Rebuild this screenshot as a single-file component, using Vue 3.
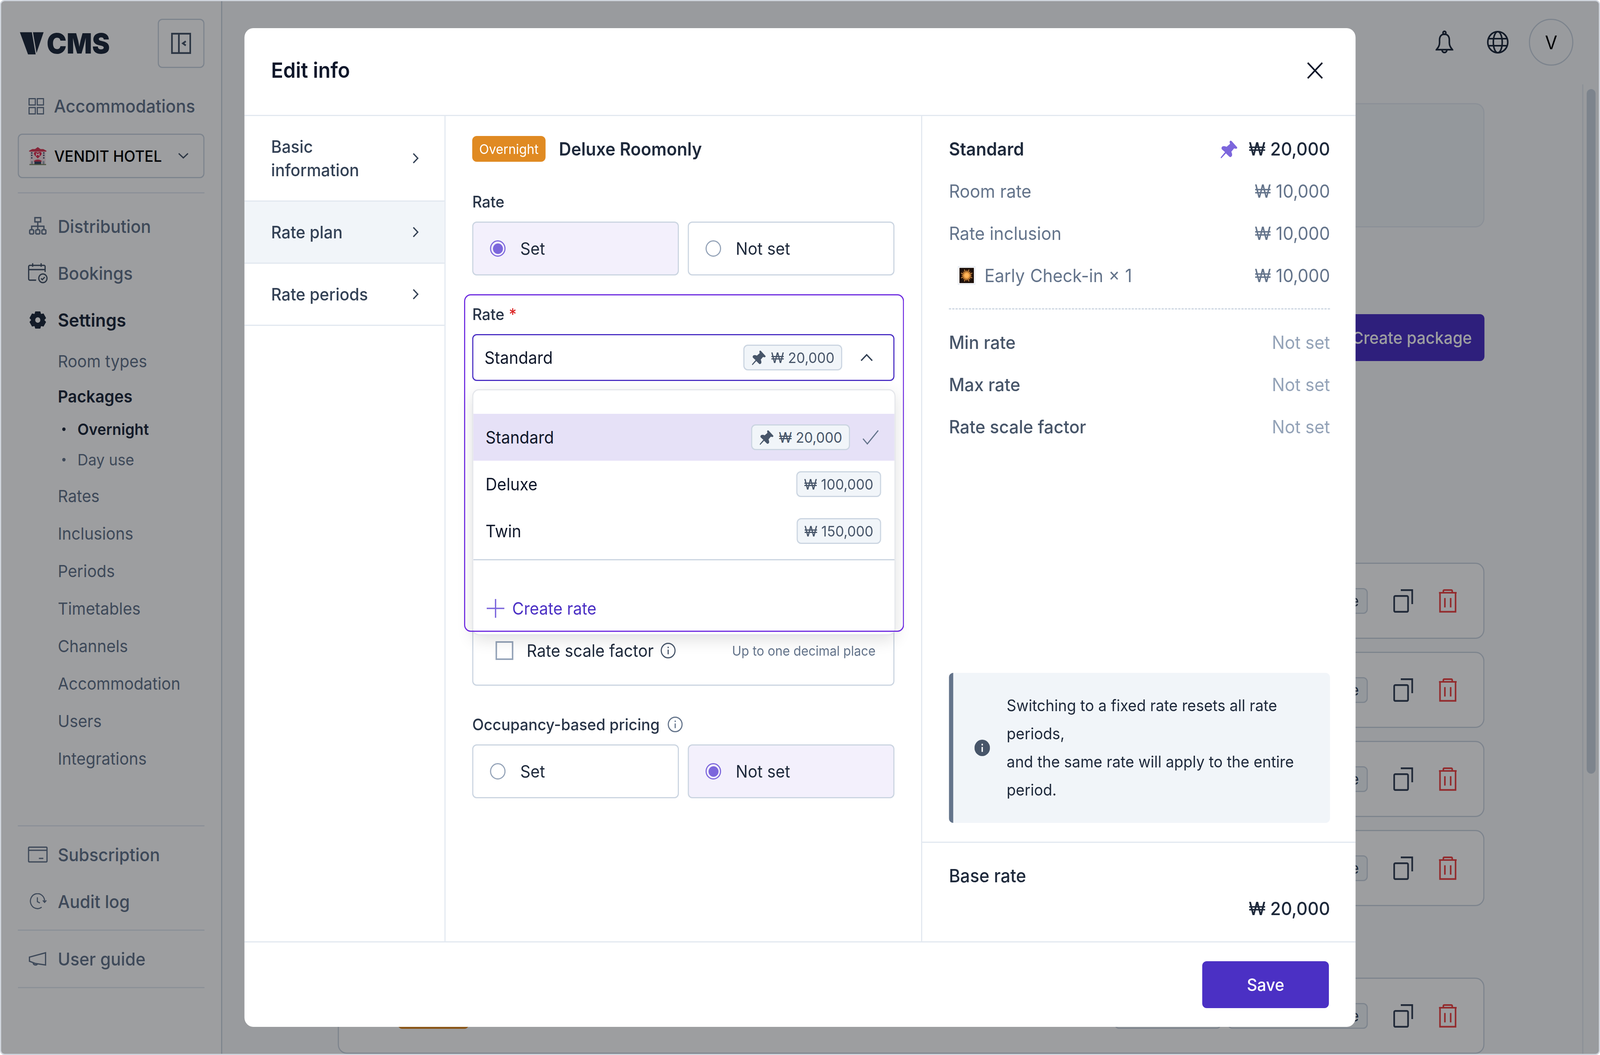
<script setup>
const fit = Math.min(1, window.innerWidth / 4320)
const subNav = ['Rates', 'Inclusions', 'Periods', 'Timetables', 'Channels', 'Accommodation', 'Users', 'Integrations']
const rows = [1, 2, 3, 4]
const pinPath = 'M150 62Q155 52 165 60L208 105Q214 115 200 118L185 115L163 140Q172 160 168 170Q160 185 148 178L120 152L85 188Q76 192 80 180L113 143L88 122Q80 110 92 100Q110 95 125 103L153 80Q148 70 150 62Z'
function gearPath() {
  const cx = 9, cy = 9, teeth = 6, ro = 8.6, ri = 6.6
  let d = ''
  for (let i = 0; i < teeth; i++) {
    const a = (i / teeth) * Math.PI * 2 - Math.PI / 2
    const w = 0.3, g = 0.24
    const pts = [[a - w - g, ri], [a - w, ro], [a + w, ro], [a + w + g, ri]]
    pts.forEach(([t, r], j) => {
      const x = (cx + r * Math.cos(t)).toFixed(2), y = (cy + r * Math.sin(t)).toFixed(2)
      d += (i === 0 && j === 0 ? 'M' : 'L') + x + ' ' + y
    })
  }
  return d + 'Z M9 6.4a2.6 2.6 0 1 0 0 5.2a2.6 2.6 0 1 0 0-5.2Z'
}
const gear = gearPath()
const rays = Array.from({ length: 16 }, (_, i) => {
  const a = (i / 16) * Math.PI * 2
  const r = i % 2 ? 5.6 : 4
  return `M8 8L${(8 + r * Math.cos(a)).toFixed(2)} ${(8 + r * Math.sin(a)).toFixed(2)}`
}).join('')
</script>

<template>
  <div class="page" :style="{ transform: `scaleX(${fit})` }">
    <aside class="side">
      <div class="brand">
        <div class="logo">
          <svg class="logo-v" viewBox="0 0 22 20"><path d="M0 .2H11L14.5 19.5H7.5Z M12 .2H21.8L15.3 18.2Z" /></svg>
          <span class="logo-t">CMS</span>
        </div>
        <button class="collapse">
          <svg viewBox="0 0 18 18" class="ic18"><rect x=".75" y=".75" width="16.5" height="16.5" /><path d="M7 .75V17.25M13.2 7.2L10.6 9L13.2 10.8" /></svg>
        </button>
      </div>
      <a class="acc">
        <svg viewBox="0 0 14 14" class="ic14"><rect x=".5" y=".5" width="5.6" height="5.4" /><rect x="7.9" y=".5" width="5.6" height="5.4" /><rect x=".5" y="8.1" width="5.6" height="5.4" /><rect x="7.9" y="8.1" width="5.6" height="5.4" /></svg>
        <span>Accommodations</span>
      </a>
      <button class="hotel">
        <svg viewBox="0 0 16 16" class="emoji">
          <rect x="1" y="3.5" width="14" height="11.5" fill="#f3e1e4" />
          <path d="M.2 3.6L3 2.2H5.5L8 .5L10.5 2.2H13L15.8 3.6V4.3H.2Z" fill="#d83a55" />
          <path d="M8 10.2L4.8 7Q3.9 5 5.8 4.6Q7.2 4.4 8 5.4Q8.8 4.4 10.2 4.6Q12.1 5 11.2 7Z" fill="#e02f52" />
          <path d="M6.8 5.6V8M9.2 5.6V8M6.8 6.8H9.2" stroke="#fff" stroke-width=".7" fill="none" />
          <path d="M2 5.5H3.2M2 7.5H3.2M12.8 5.5H14M12.8 7.5H14M2 9.7H3.2M12.8 9.7H14" stroke="#3d4b6b" stroke-width="1.1" />
          <path d="M5 15V12.5H11V15Z" fill="#36465f" />
          <path d="M4.5 12.2Q8 10 11.5 12.2V12.8H4.5Z" fill="#d83a55" />
          <path d="M2 15V12.5H3.6V15M12.4 15V12.5H14V15" fill="#9aa6b5" />
          <path d="M.5 15.4H15.5" stroke="#7d8a66" stroke-width=".9" />
        </svg>
        <span class="hotel-name">VENDIT HOTEL</span>
        <svg viewBox="0 0 12 7" class="hotel-chev"><path d="M1 1L6 5.5L11 1" /></svg>
      </button>
      <div class="rule rule-a"></div>
      <a class="item">
        <svg viewBox="0 0 16 16" class="ic-main"><rect x="5.4" y=".7" width="5.2" height="3.6" /><path d="M8 4.5V8M2.5 11V8H13.5V11M8 8V11" /><rect x=".7" y="11" width="3.6" height="3.6" rx=".8" /><rect x="6.2" y="11" width="3.6" height="3.6" rx=".8" /><rect x="11.7" y="11" width="3.6" height="3.6" rx=".8" /></svg>
        <span>Distribution</span>
      </a>
      <a class="item">
        <svg viewBox="0 0 18 18" class="ic18 bare"><path d="M7.5 15H1.8A1 1 0 0 1 .8 14V3.4A1 1 0 0 1 1.8 2.4H14.6A1 1 0 0 1 15.6 3.4V8M.8 6H15.6M4.4.6V3.6M12 .6V3.6" /><circle cx="13.6" cy="13.4" r="3.7" /><path d="M11.9 13.5L13.1 14.6L15.3 12.4" /></svg>
        <span>Bookings</span>
      </a>
      <a class="item strong">
        <svg viewBox="0 0 18 18" class="gear"><path :d="gear" fill-rule="evenodd" /></svg>
        <span>Settings</span>
      </a>
      <a class="sub sub-first">Room types</a>
      <a class="sub sub-strong">Packages</a>
      <a class="leaf leaf-on"><i></i>Overnight</a>
      <a class="leaf"><i></i>Day use</a>
      <div class="sub-rest">
        <a v-for="s in subNav" :key="s" class="sub tall">{{ s }}</a>
      </div>
      <div class="rule rule-b"></div>
      <a class="item">
        <svg viewBox="0 0 18 14" class="ic-wide"><rect x=".7" y=".7" width="16.6" height="12.6" rx=".8" /><path d="M.7 3.4H17.3M10 10.3H14" /></svg>
        <span>Subscription</span>
      </a>
      <a class="item">
        <svg viewBox="0 0 18 16" class="ic-wide"><path d="M16 8A7.3 7.3 0 1 0 13 13.6M14.2 7L16 8.9L17.8 7" /><path d="M8.6 4V8.2L11.2 9.5" /></svg>
        <span>Audit log</span>
      </a>
      <div class="rule rule-c"></div>
      <a class="item">
        <svg viewBox="0 0 18 14" class="ic-wide"><path d="M1.5 5.5L16 1.8V12.2L7 11L1.5 9Z M4.8 10.1Q5 12.4 7.4 12.2Q8.6 12 8.6 11.2" /></svg>
        <span>User guide</span>
      </a>
      <div class="rule rule-d"></div>
    </aside>

    <main class="main">
      <header class="top">
        <svg viewBox="0 0 16 20" class="bell"><circle cx="8" cy="2" r="1.3" /><path d="M8 3.2C4.8 3.2 3.6 5.5 3.6 8.2V10.5C3.6 13 2.4 14.5 .8 16.4H15.2C13.6 14.5 12.4 13 12.4 10.5V8.2C12.4 5.5 11.2 3.2 8 3.2ZM5.8 16.6A2.2 2.2 0 0 0 10.2 16.6" /></svg>
        <svg viewBox="0 0 20 20" class="globe"><circle cx="10" cy="10" r="9" /><ellipse cx="10" cy="10" rx="4" ry="9" /><path d="M1.6 7H18.4M1.6 13H18.4" /></svg>
        <div class="avatar">V</div>
      </header>
      <div class="body">
        <div class="content">
          <div class="panel"></div>
          <button class="create">Create package</button>
          <div class="list">
            <div v-for="r in rows" :key="r" class="row">
              <span class="pill">Edit rate</span>
              <svg viewBox="0 0 18 20" class="copy"><rect x=".75" y="5.75" width="12.5" height="13.5" rx="1" /><path d="M6.7 .75H17V12.7" /></svg>
              <svg viewBox="0 0 16 20" class="trash"><path d="M0 3H16M4 3V1.6Q4 .7 5 .7H11Q12 .7 12 1.6V3M1 3V19.2H15V3M5.4 7.5V15.5M10.6 7.5V15.5" /></svg>
            </div>
            <div class="row last">
              <span class="orange"></span>
              <span class="pill wide"></span>
              <span class="pill">Edit rate</span>
              <svg viewBox="0 0 18 20" class="copy"><rect x=".75" y="5.75" width="12.5" height="13.5" rx="1" /><path d="M6.7 .75H17V12.7" /></svg>
              <svg viewBox="0 0 16 20" class="trash"><path d="M0 3H16M4 3V1.6Q4 .7 5 .7H11Q12 .7 12 1.6V3M1 3V19.2H15V3M5.4 7.5V15.5M10.6 7.5V15.5" /></svg>
            </div>
          </div>
        </div>
        <div class="track"><div class="thumb"></div></div>
      </div>
    </main>

    <div class="overlay">
      <section class="modal">
        <header class="m-head">
          <h2>Edit info</h2>
          <svg viewBox="0 0 16 16" class="close"><path d="M1 1L15 15M15 1L1 15" /></svg>
        </header>
        <div class="m-body">
          <nav class="m-nav">
            <a class="m-link">
              <span>Basic<br />information</span>
              <svg viewBox="0 0 6 10" class="m-chev"><path d="M1 1L5 5L1 9" /></svg>
            </a>
            <a class="m-link on">
              <span>Rate plan</span>
              <svg viewBox="0 0 6 10" class="m-chev"><path d="M1 1L5 5L1 9" /></svg>
            </a>
            <a class="m-link">
              <span>Rate periods</span>
              <svg viewBox="0 0 6 10" class="m-chev"><path d="M1 1L5 5L1 9" /></svg>
            </a>
          </nav>

          <div class="form">
            <div class="title-row">
              <span class="tag">Overnight</span>
              <span class="pkg">Deluxe Roomonly</span>
            </div>
            <label class="label first">Rate</label>
            <div class="choice">
              <div class="opt sel"><i class="radio on"></i>Set</div>
              <div class="opt"><i class="radio"></i>Not set</div>
            </div>
            <label class="label second">Rate <b>*</b></label>
            <div class="select">
              <span class="sel-text">Standard</span>
              <span class="chip">
                <svg viewBox="70 45 150 150" class="chip-pin"><path :d="pinPath" /></svg>
                ₩ 20,000
              </span>
              <svg viewBox="0 0 12 7" class="sel-chev"><path d="M1 6L6 1L11 6" /></svg>
            </div>
            <div class="extras">
              <div class="extra-row">
                <i class="check"></i>
                <span class="extra-name">Rate scale factor</span>
                <svg viewBox="0 0 14 14" class="info"><circle cx="7" cy="7" r="6.2" /><path d="M7 6.2V10.2M7 3.7V4.9" /></svg>
                <span class="hint">Up to one decimal place</span>
              </div>
            </div>
            <label class="label third">
              Occupancy-based pricing
              <svg viewBox="0 0 14 14" class="info light"><circle cx="7" cy="7" r="6.2" /><path d="M7 6.2V10.2M7 3.7V4.9" /></svg>
            </label>
            <div class="choice">
              <div class="opt"><i class="radio"></i>Set</div>
              <div class="opt sel"><i class="radio on"></i>Not set</div>
            </div>

            <div class="drop">
              <div class="drop-list">
                <div class="drop-row active">
                  <span class="drop-name">Standard</span>
                  <span class="chip">
                    <svg viewBox="70 45 150 150" class="chip-pin"><path :d="pinPath" /></svg>
                    ₩ 20,000
                  </span>
                  <svg viewBox="0 0 15 13" class="tick"><path d="M.7 7.6L4.6 12L14.4 .6" /></svg>
                </div>
                <div class="drop-row">
                  <span class="drop-name">Deluxe</span>
                  <span class="chip">₩ 100,000</span>
                </div>
                <div class="drop-row">
                  <span class="drop-name">Twin</span>
                  <span class="chip">₩ 150,000</span>
                </div>
              </div>
              <div class="drop-foot">
                <svg viewBox="0 0 16 16" class="plus"><path d="M8 0V16M0 8H16" /></svg>
                <span>Create rate</span>
              </div>
            </div>
            <div class="focus"></div>
          </div>

          <div class="summary">
            <div class="sum-top">
              <div class="line head">
                <span>Standard</span>
                <span class="price">
                  <svg viewBox="70 45 150 150" class="big-pin"><path :d="pinPath" /></svg>
                  ₩ 20,000
                </span>
              </div>
              <div class="line muted"><span>Room rate</span><span>₩ 10,000</span></div>
              <div class="line muted"><span>Rate inclusion</span><span>₩ 10,000</span></div>
              <div class="line muted">
                <span class="early">
                  <svg viewBox="0 0 16 16" class="spark">
                    <defs>
                      <radialGradient id="sparkGlow">
                        <stop offset="0" stop-color="#fff3c4" />
                        <stop offset=".35" stop-color="#f59a35" />
                        <stop offset="1" stop-color="#7a3208" stop-opacity="0" />
                      </radialGradient>
                    </defs>
                    <rect x=".4" y=".4" width="15.2" height="15.2" fill="#fff" stroke="#e2e8f0" stroke-width=".6" />
                    <rect x="1.5" y="1.5" width="13" height="13" fill="#1b0f0a" />
                    <circle cx="8" cy="8" r="5.6" fill="url(#sparkGlow)" />
                    <path :d="rays" stroke="#ffb65c" stroke-width=".45" />
                  </svg>
                  <span class="early-text">Early Check-in × 1</span>
                </span>
                <span>₩ 10,000</span>
              </div>
              <div class="dash"></div>
              <div class="line plain"><span>Min rate</span><span class="unset">Not set</span></div>
              <div class="line plain"><span>Max rate</span><span class="unset">Not set</span></div>
              <div class="line plain"><span>Rate scale factor</span><span class="unset">Not set</span></div>
              <div class="notice">
                <svg viewBox="0 0 14 14" class="notice-ic"><circle cx="7" cy="7" r="7" /><path d="M7 6.2V10.4M7 3.5V4.9" /></svg>
                <p>Switching to a fixed rate resets all rate periods,<br />and the same rate will apply to the entire period.</p>
              </div>
            </div>
            <div class="base">
              <div class="base-name">Base rate</div>
              <div class="base-val">₩ 20,000</div>
            </div>
          </div>
        </div>
        <footer class="m-foot"><button class="save">Save</button></footer>
      </section>
    </div>
  </div>
</template>

<style scoped>
.page {
  zoom: 3;
  transform-origin: 0 0;
  position: relative;
  width: 1440px;
  height: 900px;
  box-sizing: border-box;
  display: flex;
  overflow: hidden;
  border: 1px solid #cfd4dc;
  border-radius: 4px;
  background: #f8fafc;
  font-family: Inter, "Noto Sans", sans-serif;
  color: #1e293b;
}
svg { display: block; flex: none; fill: none; }
button { font-family: inherit; cursor: pointer; }

/* sidebar */
.side {
  width: 199px;
  flex: none;
  box-sizing: border-box;
  background: #fff;
  border-right: 1px solid #cbd5e1;
  padding: 0 15px;
  display: flex;
  flex-direction: column;
}
.brand { height: 73px; display: flex; align-items: center; justify-content: space-between; flex: none; padding-bottom: 1px; box-sizing: border-box; }
.logo { display: flex; align-items: center; margin-left: 1.5px; }
.logo-v { width: 22px; height: 19.6px; fill: #1e293b; }
.logo-t { font-weight: 900; font-size: 24px; line-height: 20px; color: #1e293b; margin-left: 2.5px; }
.collapse { width: 42px; height: 42px; box-sizing: border-box; border: 1px solid #cbd5e1; background: #fff; border-radius: 4px; padding: 0; display: flex; align-items: center; justify-content: center; }
.ic18 { width: 18px; height: 18px; stroke: #475569; stroke-width: 1.5; }
.ic18.bare { stroke-width: 1.1; }
.acc { height: 33px; display: flex; align-items: center; gap: 9px; padding-left: 9.5px; font-size: 15.2px; font-weight: 500; color: #64748b; flex: none; }
.ic14 { width: 14px; height: 14px; stroke: #64748b; stroke-width: 1; }
.hotel { margin-top: 7px; height: 38px; flex: none; box-sizing: border-box; width: 168px; border: 1px solid #cbd5e1; border-radius: 4px; background: #fff; padding: 0 13px 0 9px; display: flex; align-items: center; color: #000; }
.emoji { width: 16px; height: 16px; }
.hotel-name { margin-left: 6.8px; font-size: 13.3px; font-weight: 500; white-space: nowrap; }
.hotel-chev { width: 10px; height: 6px; margin-left: auto; stroke: #475569; stroke-width: 1.3; }
.rule { height: 1px; background: #e2e8f0; flex: none; }
.rule-a { margin-top: 12px; margin-bottom: 8px; }
.item { height: 40px; flex: none; display: flex; align-items: center; gap: 9px; padding-left: 9px; font-size: 15.2px; font-weight: 500; color: #64748b; }
.item.strong { font-weight: 600; font-size: 15.5px; color: #1e293b; }
.ic-main { width: 16px; height: 16px; margin: 0 1px; stroke: #64748b; stroke-width: 1.2; }
.gear { width: 16px; height: 16px; margin: 0 1px; fill: #1e293b; }
.ic-wide { width: 18px; height: 14px; stroke: #64748b; stroke-width: 1.1; }
.sub { display: flex; align-items: center; height: 30px; padding-left: 36px; font-size: 14.3px; color: #64748b; flex: none; }
.sub-strong { font-weight: 600; color: #1e293b; }
.sub.tall { height: 32px; }
.sub-rest { margin-top: 2px; flex: none; }
.leaf { display: flex; align-items: center; height: 26px; padding-left: 40px; font-size: 13.4px; color: #64748b; flex: none; }
.leaf i { width: 3px; height: 3px; border-radius: 50%; background: currentColor; margin-right: 10.7px; }
.leaf-on { font-weight: 600; color: #1e293b; }
.rule-b { margin-top: 41px; margin-bottom: 4px; }
.rule-c { margin-top: 4px; margin-bottom: 4px; }
.rule-d { margin-top: 4px; }

/* main */
.main { flex: 1; display: flex; flex-direction: column; min-width: 0; }
.top { height: 71px; flex: none; display: flex; align-items: center; justify-content: flex-end; padding-right: 23px; padding-bottom: 1px; box-sizing: border-box; }
.bell { width: 16px; height: 20px; stroke: #1e293b; stroke-width: 1.4; margin-right: 30px; }
.globe { width: 20px; height: 20px; stroke: #1e293b; stroke-width: 1.4; margin-right: 18px; }
.avatar { width: 40px; height: 40px; box-sizing: border-box; border: 1px solid #cbd5e1; border-radius: 50%; display: flex; align-items: center; justify-content: center; color: #000; font-size: 16px; }
.body { flex: 1; min-height: 0; display: flex; }
.content { flex: 1; min-width: 0; padding: 16px 88px 0 104px; box-sizing: border-box; overflow: hidden; display: flex; flex-direction: column; align-items: stretch; }
.panel { height: 106px; flex: none; box-sizing: border-box; background: #f1f5f9; border: 1px solid #e2e8f0; border-radius: 8px; }
.create { margin-top: 74px; align-self: flex-end; width: 128px; height: 40px; flex: none; border: 0; border-radius: 4px; background: #4b30c4; color: #fff; font-size: 14.3px; font-weight: 500; padding: 0 2.5px 0 0; }
.list { margin-top: 172px; display: flex; flex-direction: column; gap: 11px; }
.row { height: 65px; flex: none; box-sizing: border-box; border: 1px solid #cbd5e1; border-radius: 8px; background: #fff; display: flex; align-items: center; justify-content: flex-end; padding-right: 24px; }
.row.last { margin-top: 50px; position: relative; }
.pill { width: 100px; height: 22px; box-sizing: border-box; border: 1px solid #cbd5e1; background: #f1f5f9; border-radius: 4px; font-size: 13px; color: #334155; display: flex; align-items: center; justify-content: flex-end; padding-right: 7px; margin-right: 23px; white-space: nowrap; }
.pill.wide { width: 96px; margin-right: 6px; }
.row.last .pill:not(.wide) { width: 126px; }
.orange { width: 64px; height: 22px; background: #e08a22; border-radius: 4px; margin-right: auto; margin-left: 53px; }
.copy { width: 18px; height: 20px; stroke: #334155; stroke-width: 1.5; margin-right: 23px; }
.trash { width: 16px; height: 20px; stroke: #ef4444; stroke-width: 1.4; }
.track { width: 15px; flex: none; box-sizing: border-box; border-left: 1px solid #e2e8f0; padding: 4px 3px 0 3px; }
.thumb { width: 8px; height: 584px; border-radius: 4px; background: #cbd5e1; }

/* overlay and modal */
.overlay { position: absolute; inset: -1px; background: rgba(3, 5, 10, .39); }
.modal { position: absolute; left: 220px; top: 24px; width: 1000px; height: 852px; background: #fff; border-radius: 8px; display: flex; flex-direction: column; overflow: hidden; }
.m-head { height: 75px; flex: none; box-sizing: border-box; border-bottom: 1px solid #e2e8f0; display: flex; align-items: center; justify-content: space-between; padding: 0 29px 2px 24px; }
.m-head h2 { margin: 0; font-size: 18px; line-height: 28px; font-weight: 600; color: #0f172a; }
.close { width: 15px; height: 15px; stroke: #0f172a; stroke-width: 1.5; }
.m-body { flex: 1; min-height: 0; display: flex; }
.m-foot { height: 73px; flex: none; box-sizing: border-box; border-top: 1px solid #e2e8f0; display: flex; align-items: flex-start; justify-content: flex-end; padding: 16px 24px 0 0; }
.save { width: 114px; height: 40px; border: 0; border-radius: 4px; background: #4b30c4; color: #fff; font-size: 14.4px; font-weight: 500; }

.m-nav { width: 181px; flex: none; box-sizing: border-box; border-right: 1px solid #e2e8f0; }
.m-link { display: flex; align-items: center; justify-content: space-between; box-sizing: content-box; padding: 16px 24px; border-bottom: 1px solid #e2e8f0; font-size: 14.5px; line-height: 20px; font-weight: 500; color: #334155; }
.m-link.on { background: #f1f5f9; }
.m-chev { width: 6px; height: 10px; stroke: #334155; stroke-width: 1.1; margin-right: -1px; }

.form { position: relative; width: 429px; flex: none; box-sizing: border-box; border-right: 1px solid #e2e8f0; padding: 17px 24px 0; }
.title-row { display: flex; align-items: center; gap: 12px; height: 22px; }
.tag { width: 66px; height: 22px; border-radius: 4px; background: #e08a22; color: #fff; font-size: 11.5px; display: flex; align-items: center; justify-content: center; }
.pkg { font-size: 15.3px; font-weight: 600; color: #1e293b; }
.label { display: flex; align-items: center; gap: 7px; height: 20px; font-size: 13.6px; font-weight: 500; color: #293548; }
.label b { color: #dc2626; font-weight: 500; margin-left: -3px; }
.label.first { margin-top: 24px; margin-bottom: 7px; }
.label.second { margin-top: 23px; margin-bottom: 7px; }
.label.third { margin-top: 23px; margin-bottom: 7px; }
.choice { display: flex; gap: 8px; }
.opt { flex: 1; height: 46px; box-sizing: border-box; border: 1px solid #cbd5e1; border-radius: 4px; display: flex; align-items: center; gap: 13.2px; padding-left: 15px; font-size: 14.4px; color: #1e293b; }
.opt.sel { background: #f3f0fc; }
.radio { width: 14px; height: 14px; box-sizing: border-box; border: 1.2px solid #94a3b8; border-radius: 50%; background: #fff; flex: none; }
.radio.on { border-color: #7c66dc; padding: 1.5px; background: #7c66dc content-box; }
.select { height: 40px; box-sizing: border-box; border: 1px solid #4b30c4; border-radius: 4px; display: flex; align-items: center; padding: 0 18px 0 10px; font-size: 14.4px; color: #0f172a; }
.sel-text { margin-right: auto; }
.chip { height: 22px; box-sizing: border-box; border: 1px solid #cbd5e1; border-radius: 4px; background: #f1f5f9; color: #475569; font-size: 12.4px; display: flex; align-items: center; gap: 4px; padding: 0 6px; white-space: nowrap; }
.chip-pin { width: 14px; height: 14px; fill: #475569; }
.sel-chev { width: 12px; height: 7px; margin-left: 16px; stroke: #334155; stroke-width: 1.2; }
.extras { margin-top: 16px; height: 244px; box-sizing: border-box; border: 1px solid #cbd5e1; border-radius: 4px; display: flex; flex-direction: column; justify-content: flex-end; padding: 0 16px 20px 20px; }
.extra-row { display: flex; align-items: center; height: 18px; font-size: 14.4px; color: #1e293b; }
.check { width: 16px; height: 16px; box-sizing: border-box; border: 1.5px solid #94a3b8; flex: none; margin-right: 12px; }
.extra-name { margin-right: 6px; }
.info { width: 14px; height: 14px; stroke: #475569; stroke-width: 1; }
.info.light { stroke: #64748b; }
.hint { margin-left: auto; font-size: 11.3px; color: #64748b; }

.drop { position: absolute; left: 24px; top: 233px; width: 381px; height: 210px; box-sizing: border-box; background: #fff; border: 1px solid #e5e7eb; border-radius: 6px; box-shadow: 0 4px 14px rgba(0, 0, 0, .12); overflow: hidden; }
.drop-list { padding: 20px 0 4px; border-bottom: 1px solid #cbd5e1; }
.drop-row { height: 40px; display: flex; align-items: center; padding: 0 12px 0 11px; font-size: 14.4px; color: #0f172a; }
.drop-row.active { background: #e6e1f7; }
.drop-name { margin-right: auto; }
.tick { width: 15px; height: 13px; margin-left: 11px; stroke: #64748b; stroke-width: 1; margin-right: 2px; }
.drop-foot { display: flex; align-items: center; gap: 7px; padding: 29px 12px 0; font-size: 14.4px; line-height: 24px; color: #4b30c4; }
.plus { width: 16px; height: 16px; stroke: #7c66dc; stroke-width: 1.2; }
.focus { position: absolute; left: 16.5px; top: 152px; width: 396px; height: 288px; box-sizing: border-box; border: 1px solid #6d2ae0; border-radius: 6px; pointer-events: none; }

.summary { flex: 1; min-width: 0; display: flex; flex-direction: column; }
.sum-top { flex: 1; min-height: 0; box-sizing: border-box; padding: 16px 23px 16px 24px; border-bottom: 1px solid #e2e8f0; display: flex; flex-direction: column; gap: 12px; }
.line { display: flex; justify-content: space-between; align-items: center; height: 24px; font-size: 15.4px; flex: none; }
.line.head { font-weight: 600; color: #1e293b; }
.line.head .price { font-weight: 500; font-size: 15.6px; display: flex; align-items: center; gap: 9px; }
.line.muted { color: #64748b; }
.line.plain { color: #475569; font-weight: 500; }
.unset { color: #94a3b8; font-weight: 400; }
.big-pin { width: 17px; height: 17px; fill: #7c66dc; }
.early { display: flex; align-items: center; gap: 8px; padding-left: 8px; }
.early-text { word-spacing: .4px; }
.spark { width: 16px; height: 16px; }
.dash { height: 0; border-top: 1px dashed #cbd5e1; margin: 4px 0; flex: none; }
.notice { margin-top: auto; display: flex; align-items: center; gap: 15px; height: 128px; flex: none; box-sizing: border-box; border-left: 4px solid #64748b; border-radius: 4px; background: #f1f5f9; padding: 0 16px 0 19px; }
.notice p { margin: 0; font-size: 13.5px; line-height: 24px; color: #1e293b; }
.notice-ic { width: 14px; height: 14px; fill: #475569; stroke: #fff; stroke-width: 1.2; }
.notice-ic circle { stroke: none; }
.base { height: 84px; flex: none; box-sizing: border-box; padding: 16px 23px 0 24px; }
.base-name { height: 24px; line-height: 24px; font-size: 15.5px; font-weight: 500; color: #1e293b; }
.base-val { margin-top: 4px; height: 24px; line-height: 24px; font-size: 15.6px; font-weight: 500; text-align: right; color: #1e293b; }
</style>

<style>
html, body { margin: 0; background: #fff; overflow: hidden; }
</style>
